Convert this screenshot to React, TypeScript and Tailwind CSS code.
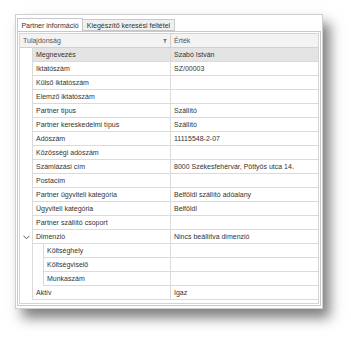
const rows: { name: string; value?: string; level?: number; expander?: boolean; selected?: boolean }[] = [
  { name: 'Megnevezés', value: 'Szabó István', selected: true },
  { name: 'Iktatószám', value: 'SZ/00003' },
  { name: 'Külső iktatószám' },
  { name: 'Elemző iktatószám' },
  { name: 'Partner típus', value: 'Szállító' },
  { name: 'Partner kereskedelmi típus', value: 'Szállító' },
  { name: 'Adószám', value: '11115548-2-07' },
  { name: 'Közösségi adószám' },
  { name: 'Számlázási cím', value: '8000 Székesfehérvár, Pöttyös utca 14.' },
  { name: 'Postacím' },
  { name: 'Partner ügyviteli kategória', value: 'Belföldi szállító adóalany' },
  { name: 'Ügyviteli kategória', value: 'Belföldi' },
  { name: 'Partner szállító csoport' },
  { name: 'Dimenzió', value: 'Nincs beállítva dimenzió', expander: true },
  { name: 'Költséghely', level: 1 },
  { name: 'Költségviselő', level: 1 },
  { name: 'Munkaszám', level: 1 },
  { name: 'Aktív', value: 'Igaz' },
];

function Row({ row }: { row: (typeof rows)[number] }) {
  const bg = row.selected ? 'bg-[#e4e4e4]' : 'bg-white';
  return (
    <div className="flex h-[14px]">
      <div className="w-[13px] shrink-0 border-r border-[#dadada] flex items-center justify-center">
        {row.expander && (
          <svg width="7" height="5" viewBox="0 0 7 5">
            <path d="M0.5 0.8 L3.5 3.8 L6.5 0.8" fill="none" stroke="#555" strokeWidth="1" />
          </svg>
        )}
      </div>
      {row.level ? <div className="w-[11px] shrink-0 border-r border-[#dadada]" /> : null}
      <div
        className={`${row.level ? 'w-[127px]' : 'w-[138px]'} shrink-0 ${bg} border-b border-r border-[#dadada] pl-[3px] flex items-center truncate`}
      >
        {row.name}
      </div>
      <div className={`flex-1 ${bg} border-b border-[#dadada] pl-[3px] flex items-center truncate`}>
        {row.value}
      </div>
    </div>
  );
}

export default function App() {
  return (
    <div className="w-[351px] h-[337px] bg-white pt-[14px] pl-[15px] text-[7px] leading-none text-[#333] font-['Liberation_Sans',_Arial,_sans-serif]">
      <div className="w-[308px] h-[295px] bg-white border border-[#cfcfcf] shadow-[7px_9px_12px_rgba(0,0,0,0.5)] pt-[3px] px-[1px] flex flex-col">
        {/* tabs */}
        <div className="flex h-[13px] items-end">
          <div className="h-[13px] w-[66px] bg-white border border-b-0 border-[#c8c8c8] flex items-center justify-center">
            Partner információ
          </div>
          <div className="h-[12px] w-[92px] bg-[#f0f0f0] border border-l-0 border-[#c8c8c8] flex items-center justify-center">
            Kiegészítő keresési feltétel
          </div>
        </div>
        {/* panel */}
        <div className="flex-1 border border-[#c8c8c8] p-[1px] mb-[2px]">
          <div className="h-full border border-[#d4d4d4] flex flex-col">
            <div className="flex h-[14px] bg-[#f3f3f3] border-b border-[#d0d0d0] text-[#555]">
              <div className="w-[151px] shrink-0 border-r border-[#d0d0d0] pl-[3px] pr-[3px] flex items-center justify-between">
                <span>Tulajdonság</span>
                <svg width="4" height="4" viewBox="0 0 4 4">
                  <path d="M0 0 H4 L2.5 2 V4 H1.5 V2 Z" fill="#777" />
                </svg>
              </div>
              <div className="flex-1 pl-[3px] flex items-center">Érték</div>
            </div>
            {rows.map((r) => (
              <Row key={r.name} row={r} />
            ))}
          </div>
        </div>
      </div>
    </div>
  );
}
